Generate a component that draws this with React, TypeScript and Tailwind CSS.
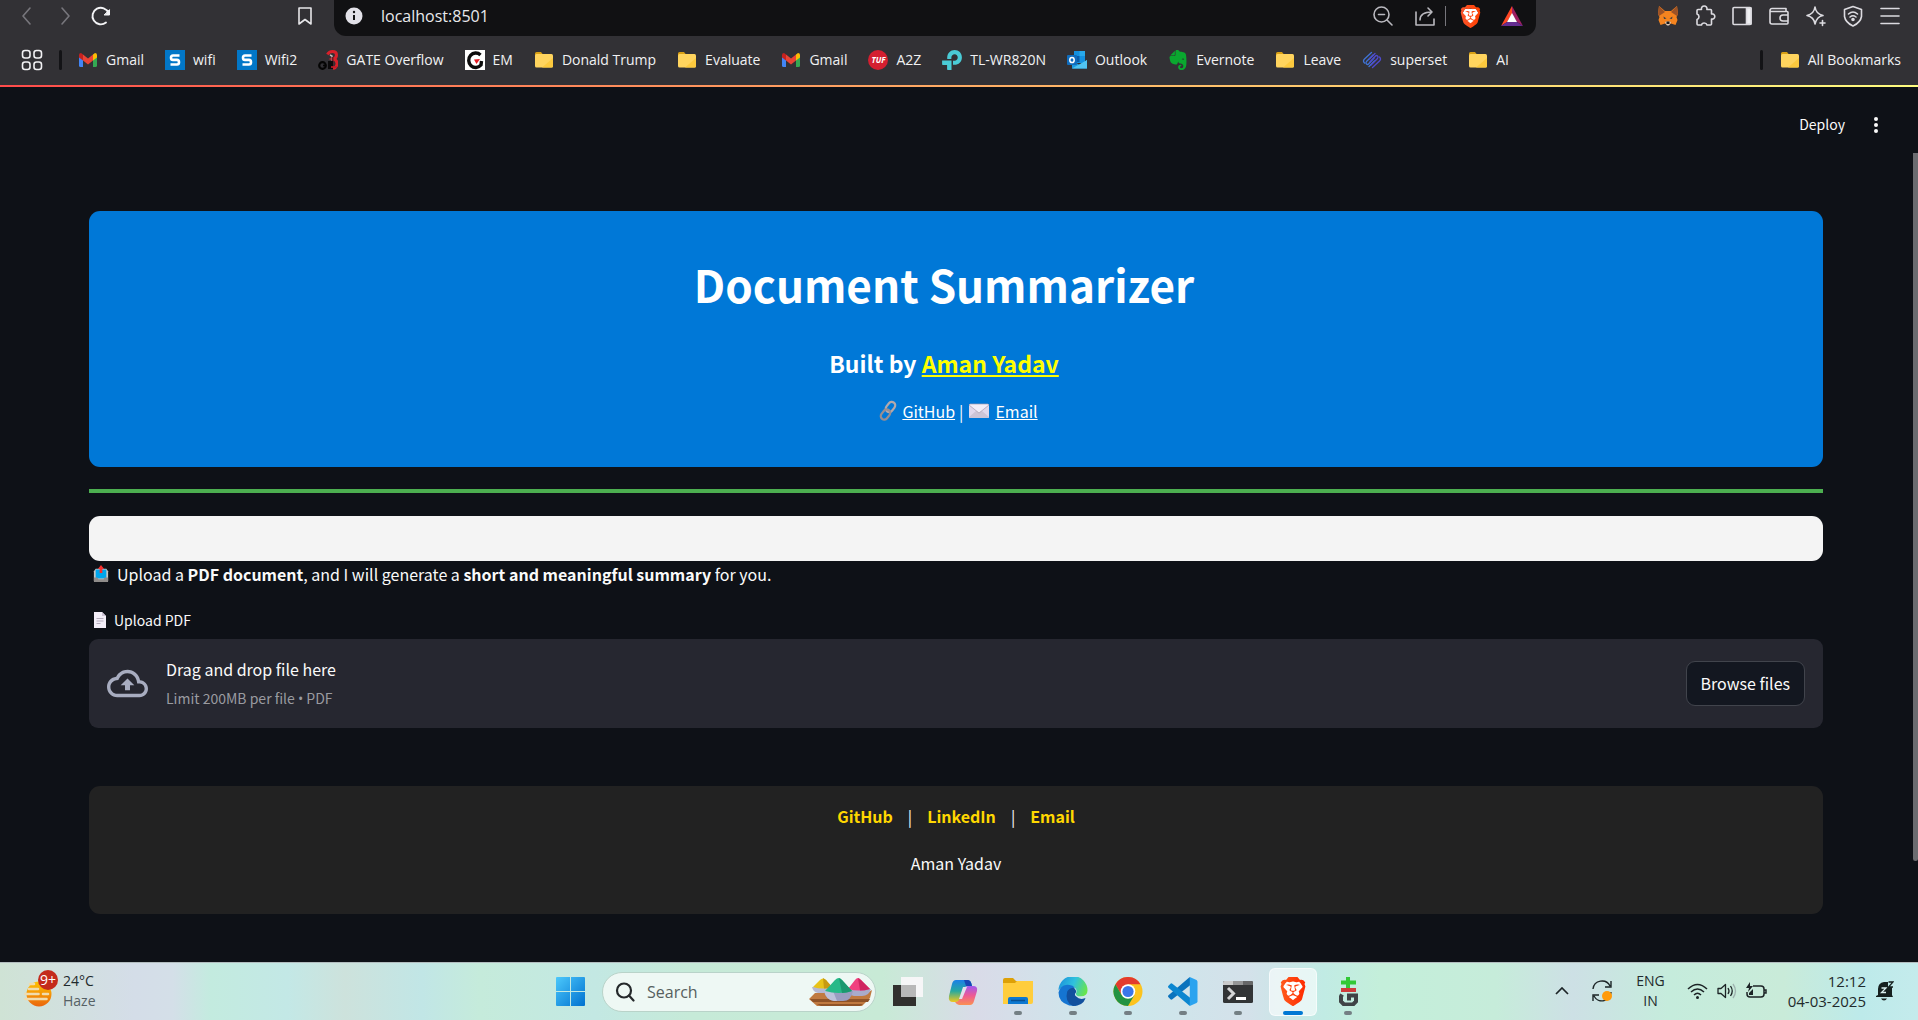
import type { ReactNode } from "react";
import { SiBrave, SiEvernote, SiTplink } from "react-icons/si";

/* ---------- shared glyphs ---------- */

function Brave({ size, from, to, id }: { size: number; from: string; to: string; id: string }) {
  return (
    <svg width={size} height={size} viewBox="0 0 24 24" aria-hidden="true">
      <defs>
        <linearGradient id={id} x1="0" x2="1">
          <stop offset="0" stopColor={from} />
          <stop offset="1" stopColor={to} />
        </linearGradient>
      </defs>
      <path d="M6 4h12l2 4-2 9-6 5-6-5-2-9z" fill="#fff" />
      <SiBrave size={24} fill={`url(#${id})`} color={from} />
    </svg>
  );
}

function Folder() {
  return (
    <svg width="20" height="20" viewBox="0 0 20 20" aria-hidden="true">
      <path d="M1 3.500Q1 2 2.500 2H7l2 2.500h8V9H1z" fill="#d9a014" />
      <rect x="1" y="4" width="18" height="13.500" rx="1.500" fill="#ffd45e" />
      <path d="M19 8v8q0 1.500-1.500 1.500H8z" fill="#fcc93e" />
    </svg>
  );
}

function Gmail() {
  return (
    <svg width="20" height="20" viewBox="0 0 20 20" aria-hidden="true">
      <path d="M1 5v10.500Q1 17 2.500 17H5V8z" fill="#4285f4" />
      <path d="M19 5v10.500q0 1.500-1.500 1.500H15V8z" fill="#34a853" />
      <path d="M15 4.500 17 3q2 0 2 2v2.500L15 10.500z" fill="#fbbc04" />
      <path d="M1 5q0-2 2-2l2 1.500v6L1 7.500z" fill="#c5221f" />
      <path d="M5 4.500 10 8.500l5-4v6l-5 4-5-4z" fill="#ea4335" />
    </svg>
  );
}

function BlueS() {
  return (
    <svg width="20" height="20" viewBox="0 0 20 20" aria-hidden="true">
      <rect width="20" height="20" fill="#0277c8" />
      <path d="M14.500 5.500H8q-2 0-2 2.200t2 2.200h4q2 0 2 2.300t-2 2.300H5.500" fill="none" stroke="#fff" strokeWidth="2.600" />
    </svg>
  );
}

function GateOverflow() {
  return (
    <svg width="20" height="20" viewBox="0 0 20 20" fill="none" aria-hidden="true">
      <path d="M9.500 4.500Q11 1.500 14.500 1.500q4 0 4 3.500 0 3-3 4 3.500 1 3.500 4.500 0 4-4 5" stroke="#d8202a" strokeWidth="3" />
      <path d="M12 5l2 1v7" stroke="#c9b9ba" strokeWidth="1.400" />
      <path d="M14.500 7v9" stroke="#6f1a20" strokeWidth="2" />
      <circle cx="4.500" cy="15.500" r="3.300" stroke="#050505" strokeWidth="2.200" />
      <path d="M10 11h5v8h-5z" fill="#0c0b0c" />
      <path d="M5 15.500h3" stroke="#050505" strokeWidth="1.600" />
      <path d="M13 17h6" stroke="#c01c27" strokeWidth="1.600" />
    </svg>
  );
}

function EmIcon() {
  return (
    <svg width="20" height="20" viewBox="0 0 20 20" aria-hidden="true">
      <rect width="20" height="20" fill="#fff" />
      <path d="M15.500 5A7 7.200 0 1 0 16 15l.5-4" fill="none" stroke="#0b0b0b" strokeWidth="3.400" />
      <path d="m9 9.500 6-.5-3.500 5z" fill="#e31b23" />
    </svg>
  );
}

function Tuf() {
  return (
    <span className="flex size-5 items-center justify-center rounded-full bg-[#d41f30] text-[8px] font-bold text-white italic">
      TUF
    </span>
  );
}

function Outlook() {
  return (
    <svg width="20" height="20" viewBox="0 0 20 20" aria-hidden="true">
      <path d="M7 1h11v12H7z" fill="#1490df" />
      <path d="M12.500 1H18v5h-5.500z" fill="#28a8ea" />
      <path d="M7 6h5.500v6H7z" fill="#0a5ca8" />
      <path d="M5 10l7.500 5L20 10v8.500H5z" fill="#1a9ae0" />
      <path d="m5 18.500 15-8.500v8.500z" fill="#50c4f2" />
      <rect y="5" width="10" height="10" rx="1" fill="#0f6cbd" />
      <ellipse cx="5" cy="10" rx="2.200" ry="2.600" fill="none" stroke="#fff" strokeWidth="1.500" />
    </svg>
  );
}

function Superset() {
  return (
    <svg width="20" height="20" viewBox="0 0 20 20" fill="none" strokeWidth="1.300" strokeLinecap="round" aria-hidden="true">
      <path d="M9.500 2.500 2.500 9q-2 2 0 4M11 5 4.500 11.500q-1 1.500 0 2.500t2 0L12 8M7 16.500 12.500 11" stroke="#3f74d8" />
      <path d="M10.500 17.500 17.500 11q2-2 0-4M9 15l6.500-6.500q1-1.500 0-2.500t-2 0L8 12M13 3.500 7.500 9" stroke="#4f4bd0" />
    </svg>
  );
}

function ToolIcon({ children, color = "#dcdbe0" }: { children: ReactNode; color?: string }) {
  return (
    <svg
      width="22"
      height="22"
      viewBox="0 0 22 22"
      fill="none"
      stroke={color}
      strokeWidth="1.600"
      strokeLinecap="round"
      strokeLinejoin="round"
      aria-hidden="true"
    >
      {children}
    </svg>
  );
}

/* ---------- browser chrome ---------- */

const bookmarks: { label: string; icon: ReactNode }[] = [
  { label: "Gmail", icon: <Gmail /> },
  { label: "wifi", icon: <BlueS /> },
  { label: "Wifi2", icon: <BlueS /> },
  { label: "GATE Overflow", icon: <GateOverflow /> },
  { label: "EM", icon: <EmIcon /> },
  { label: "Donald Trump", icon: <Folder /> },
  { label: "Evaluate", icon: <Folder /> },
  { label: "Gmail", icon: <Gmail /> },
  { label: "A2Z", icon: <Tuf /> },
  { label: "TL-WR820N", icon: <SiTplink size={20} color="#4acbd6" /> },
  { label: "Outlook", icon: <Outlook /> },
  { label: "Evernote", icon: <SiEvernote size={20} color="#0aa82f" /> },
  { label: "Leave", icon: <Folder /> },
  { label: "superset", icon: <Superset /> },
  { label: "AI", icon: <Folder /> },
];

function Toolbar() {
  return (
    <div className="flex h-9">
      <div className="flex w-[334px] shrink-0 items-center pb-1">
        <button aria-label="Back" className="ml-4">
          <ToolIcon color="#77767c"><path d="m14 3-7 8 7 8" /></ToolIcon>
        </button>
        <button aria-label="Forward" className="ml-4">
          <ToolIcon color="#77767c"><path d="m8 3 7 8-7 8" /></ToolIcon>
        </button>
        <button aria-label="Reload" className="ml-[14px]">
          <ToolIcon color="#f4f4f6">
            <path d="M16 17.500A8.300 8.300 0 1 1 18.500 8" strokeWidth="1.900" />
            <path d="M19.500 5v5h-5z" fill="#f4f4f6" strokeWidth="1" />
          </ToolIcon>
        </button>
        <button aria-label="Bookmark this page" className="mr-[18px] ml-auto">
          <ToolIcon color="#e6e6e9"><path d="M5 3h12v16l-6-4.500L5 19z" /></ToolIcon>
        </button>
      </div>
      <div className="flex flex-1 items-center rounded-b-xl bg-[#111113] pb-1">
        <svg width="18" height="18" viewBox="0 0 18 18" className="ml-[11px]" aria-hidden="true">
          <circle cx="9" cy="9" r="8.500" fill="#e2e1e8" />
          <path d="M9 8v5" stroke="#111113" strokeWidth="2" />
          <circle cx="9" cy="5" r="1.200" fill="#111113" />
        </svg>
        <input
          aria-label="Address"
          defaultValue="localhost:8501"
          className="ml-[18px] min-w-0 flex-1 bg-transparent text-base text-[#e9e9ec] outline-none"
        />
        <button aria-label="Zoom">
          <ToolIcon color="#b9b8be"><circle cx="9.500" cy="9.500" r="7.500" /><path d="m15 15 5 5M6.500 9.500h6" /></ToolIcon>
        </button>
        <button aria-label="Share" className="ml-5">
          <ToolIcon color="#b9b8be"><path d="M2 7v13h18v-6M6 15c0-6 4-8 12-8M14 3l4 4-4 4" /></ToolIcon>
        </button>
        <div className="mr-[13px] ml-[9px] h-5 w-px bg-[#77767c]" />
        <button aria-label="Brave Shields"><Brave size={23} from="#fb542b" to="#ff4000" id="shield" /></button>
        <button aria-label="Brave Rewards" className="mr-3 ml-[18px]">
          <svg width="24" height="22" viewBox="0 0 24 22" aria-hidden="true">
            <path d="M12 1v8l-5 8-6 4z" fill="#ff4724" />
            <path d="M12 1v8l5 8 6 4z" fill="#9e1f63" />
            <path d="m1 21 6-4h10l6 4z" fill="#662d91" />
            <path d="m12 8 5 9H7z" fill="#fff" />
          </svg>
        </button>
      </div>
      <div className="flex w-[382px] shrink-0 items-center justify-end gap-[15px] pr-[17px] pb-1">
        <button aria-label="MetaMask">
          <svg width="22" height="22" viewBox="0 0 22 22" aria-hidden="true">
            <path d="m2 1 6 5h6l6-5 1 8-1.500 3 1 3-2 5-4.500-1.500L12 20h-2l-2-1.500L3.500 20l-2-5 1-3L1 9z" fill="#f5841f" />
            <path d="m2 1 6 6-6 4-1-2zM20 1l-6 6 6 4 1-2z" fill="#9c5226" />
            <path d="m6.500 11.500 3 2-2.500.5zM15.500 11.500l-3 2 2.500.5z" fill="#3b3f47" />
            <path d="m8 17.500 1-1h4l1 1-2 3h-2z" fill="#d8c8bb" />
            <path d="M9.500 16.500h3v2.500h-3z" fill="#17181c" />
          </svg>
        </button>
        <button aria-label="Extensions">
          <ToolIcon><path d="M3 5.500q0-1 1-1h3.500a2.800 2.800 0 1 1 5.400 0h3.600q1 0 1 1V9a2.600 2.600 0 1 1 0 5v5q0 1-1 1H13q-.5-2-2.800-2T7.500 20H4q-1 0-1-1v-4.500q2-.5 2-2.700T3 9z" /></ToolIcon>
        </button>
        <button aria-label="Sidebar">
          <ToolIcon><rect x="2" y="2.500" width="18" height="17" rx="1" /><path d="M15.500 3H20v16h-4.500z" fill="#f0f0f3" /></ToolIcon>
        </button>
        <button aria-label="Wallet">
          <ToolIcon><path d="M18 6.500V3.500H4a2 2 0 0 0-2 2V17a2 2 0 0 0 2 2h15q1 0 1-1V7.500q0-1-1-1H3M20 10h-5a3 3 0 0 0 0 6h5z" /></ToolIcon>
        </button>
        <button aria-label="Leo AI">
          <ToolIcon><path d="M10 2q1 7 8 8.500-3 .5-5 2.500t-3 6q-1-7-8-8.500Q9 9 10 2zM17.500 15.500v5M15 18h5" /></ToolIcon>
        </button>
        <button aria-label="VPN">
          <ToolIcon><path d="m11 1.500 8.500 3v7q-1 6-8.500 9.500-7.500-3.500-8.500-9.500v-7zM6.500 9q4.500-4 9 0M8 12q3-2.500 6 0" /><circle cx="11" cy="14.500" r="1" fill="#dcdbe0" /></ToolIcon>
        </button>
        <button aria-label="Menu">
          <ToolIcon><path d="M2 3.500h18M2 11h18M2 18.500h18" /></ToolIcon>
        </button>
      </div>
    </div>
  );
}

function BookmarkBar() {
  return (
    <nav aria-label="Bookmarks" className="flex h-[49px] items-center pr-[17px] pb-[2px] pl-[21px] text-sm text-[#f1f1f3]">
      <button aria-label="Apps">
        <ToolIcon color="#f1f1f3">
          <rect x="1.500" y="1.500" width="7.500" height="7.500" rx="2.500" />
          <rect x="13" y="1.500" width="7.500" height="7.500" rx="2.500" />
          <rect x="1.500" y="13" width="7.500" height="7.500" rx="2.500" />
          <rect x="13" y="13" width="7.500" height="7.500" rx="2.500" />
        </ToolIcon>
      </button>
      <div className="mx-4 h-5 w-[3px] shrink-0 rounded bg-[#131316]" />
      <div className="flex flex-1 items-center gap-[21px]">
        {bookmarks.map((b, i) => (
          <a key={i} href="#" className="flex items-center gap-2 whitespace-nowrap">
            {b.icon}
            {b.label}
          </a>
        ))}
      </div>
      <div className="mr-[17px] h-5 w-[3px] rounded bg-[#131316]" />
      <a href="#" className="flex items-center gap-2 whitespace-nowrap"><Folder />All Bookmarks</a>
    </nav>
  );
}

/* ---------- page content ---------- */

function LinkEmoji() {
  return (
    <svg width="20" height="22" viewBox="0 0 20 22" fill="none" aria-hidden="true">
      <rect x="9" y="1.500" width="7" height="11" rx="3.500" transform="rotate(38 12.500 7)" stroke="#b4a9ac" strokeWidth="2.200" />
      <rect x="4" y="9" width="7" height="11" rx="3.500" transform="rotate(38 7.500 14.500)" stroke="#998e91" strokeWidth="2.200" />
    </svg>
  );
}

function MailEmoji() {
  return (
    <svg width="20" height="16" viewBox="0 0 20 16" aria-hidden="true">
      <rect y="1" width="20" height="14" rx="1" fill="#e1d8ec" />
      <path d="m0 14 7-6h6l7 6-1 1H1z" fill="#cdc4d6" />
      <path d="M0 2 10 10 20 2l-1-1H1z" fill="#f3eef8" stroke="#a79caf" strokeWidth=".7" />
    </svg>
  );
}

function OutboxEmoji() {
  return (
    <svg width="16" height="18" viewBox="0 0 18 20" aria-hidden="true">
      <path d="M3 4h12l2 3v11q0 1-1 1H2q-1 0-1-1V7z" fill="#c9c6c4" />
      <path d="M3 5h12v10H3z" fill="#00a6ed" />
      <path d="M1 14h4l1 2h6l1-2h4v4q0 1-1 1H2q-1 0-1-1z" fill="#8f8c8a" />
      <path d="M9 0 5.500 4.500h2V9h3V4.500h2z" fill="#f8312f" />
    </svg>
  );
}

function PageEmoji() {
  return (
    <svg width="14" height="18" viewBox="0 0 14 18" aria-hidden="true">
      <path d="M1 1h8l4 4v12H1z" fill="#f3eef8" />
      <path d="M9 1v4h4z" fill="#cdc4d6" />
      <path d="M3.500 7.500h7M3.500 10h7M3.500 12.500h4" stroke="#b4acbc" strokeWidth="1" />
    </svg>
  );
}

function Hero() {
  return (
    <section className="flex h-64 flex-col items-center rounded-[11px] bg-[#0078d7] pt-10 text-white">
      <h1 className="mr-6 text-[44px] leading-[66px] font-bold">Document Summarizer</h1>
      <h3 className="mt-7 mr-6 text-[23px] leading-9 font-bold">
        Built by <a href="#" className="text-[#ffff00] underline">Aman Yadav</a>
      </h3>
      <p className="mt-4 flex items-center gap-1 pl-1 text-base leading-7">
        <LinkEmoji />
        <a href="#" className="underline">GitHub</a>|
        <span className="ml-[2px]"><MailEmoji /></span>
        <a href="#" className="ml-[2px] underline">Email</a>
      </p>
    </section>
  );
}

function Uploader() {
  return (
    <section>
      <label htmlFor="pdf" className="flex items-center gap-[7px] pl-1 text-sm leading-6">
        <PageEmoji />
        Upload PDF
      </label>
      <input id="pdf" type="file" accept="application/pdf" className="sr-only" />
      <div className="mt-[7px] flex h-[89px] items-center rounded-[9px] bg-[#262730] px-[18px]">
        <svg width="41" height="41" viewBox="0 0 24 24" fill="#a8adc0" aria-hidden="true">
          <path d="M19.350 10.040C18.670 6.590 15.640 4 12 4 9.110 4 6.600 5.640 5.350 8.040 2.340 8.360 0 10.910 0 14c0 3.310 2.690 6 6 6h13c2.760 0 5-2.240 5-5 0-2.640-2.050-4.780-4.650-4.960zM19 18H6c-2.210 0-4-1.790-4-4 0-2.050 1.530-3.760 3.560-3.970l1.070-.11.5-.95C8.080 7.140 9.940 6 12 6c2.620 0 4.880 1.860 5.390 4.430l.3 1.500 1.530.11c1.560.1 2.780 1.410 2.780 2.960 0 1.650-1.350 3-3 3zM8 13h2.550v3h2.900v-3H16l-4-4z" />
        </svg>
        <div className="ml-[18px] flex-1">
          <p className="text-base leading-[30px]">Drag and drop file here</p>
          <p className="text-sm leading-7 text-[#9a9ba0]">
            Limit 200MB per file <span className="font-['Open_Sans']">•</span> PDF
          </p>
        </div>
        <button className="h-[45px] rounded-[9px] border border-[#41444c] bg-[#131720] px-[14px] pb-[2px] text-base">
          Browse files
        </button>
      </div>
    </section>
  );
}

function Page() {
  return (
    <div className="flex flex-1 bg-[#0e1117] font-['Noto_Sans_CJK_SC',sans-serif] text-[#fafafa]">
      <main className="flex-1 pb-12">
        <header className="flex h-[76px] items-center justify-end gap-[22px] pr-7 text-sm">
          <button className="pb-[2px]">Deploy</button>
          <button aria-label="Main menu">
            <svg width="18" height="18" viewBox="0 0 18 18" fill="#fafafa" aria-hidden="true">
              <circle cx="9" cy="3" r="2" />
              <circle cx="9" cy="9" r="2" />
              <circle cx="9" cy="15" r="2" />
            </svg>
          </button>
        </header>
        <div className="mt-12 mr-[90px] ml-[89px]">
          <Hero />
          <hr className="mt-[22px] border-t-4 border-[#4caf50]" />
          <div className="mt-[23px] h-[45px] rounded-[11px] bg-[#f4f4f4]" />
          <p className="flex items-center gap-2 pl-1 text-base leading-[26px]">
            <OutboxEmoji />
            <span>
              Upload a <b>PDF document</b>, and I will generate a <b>short and meaningful summary</b> for you.
            </span>
          </p>
          <div className="mt-[21px]">
            <Uploader />
          </div>
          <footer className="mt-[58px] h-32 rounded-[11px] bg-[#222222] pt-4 text-center text-base leading-7">
            <p className="flex justify-center gap-[15px]">
              <a href="#" className="font-bold text-[#ffd700]">GitHub</a>|
              <a href="#" className="font-bold text-[#ffd700]">LinkedIn</a>|
              <a href="#" className="font-bold text-[#ffd700]">Email</a>
            </p>
            <p className="mt-[19px]">Aman Yadav</p>
          </footer>
        </div>
      </main>
      <div className="w-[5px] pt-[66px]">
        <div className="h-[708px] rounded-b bg-[#6b6c70]" />
      </div>
    </div>
  );
}

/* ---------- taskbar ---------- */

function TaskCell({ children, label, state }: { children: ReactNode; label: string; state?: "open" | "active" }) {
  return (
    <div className="flex w-[55px] justify-center">
      <button
        aria-label={label}
        className={
          state === "active"
            ? "flex h-12 w-12 flex-col items-center rounded-md border border-white/60 bg-white/60 pt-2"
            : "flex h-12 w-12 flex-col items-center pt-[9px]"
        }
      >
        {children}
        {state === "open" && <span className="mt-[5px] h-1 w-2 rounded-full bg-[#747f84]" />}
        {state === "active" && <span className="mt-[5px] h-1 w-5 rounded-full bg-[#0078d4]" />}
      </button>
    </div>
  );
}

function HoliArt() {
  return (
    <svg width="64" height="30" viewBox="0 0 64 30" aria-hidden="true">
      <path d="M0 22 6 16h52l5-3-2 8-8 8H8z" fill="#c07a40" />
      <path d="M1 22h60l-2 3H4zM8 27h46l-3 2H12z" fill="#8f5327" />
      <path d="M3 10h22q-2 6-8 6H9q-5-1-6-6z" fill="#b5b8d2" />
      <path d="m4 10 7-7q3-3 6 0l6 7q-9 3-19 0z" fill="#e8c318" />
      <path d="m14 1 3 2 6 7q-4 1.500-8 1.500z" fill="#c79a10" />
      <path d="M38 12h24q-2 7-9 7h-8q-6-1-7-7z" fill="#a9abca" />
      <path d="m39 12 7-9q3-4 6 0l9 9q-11 3-22 0z" fill="#f0417f" />
      <path d="m49 1 3 2 9 9q-5 1.500-10 1.500z" fill="#cf2560" />
      <path d="M15 14h29q-2 10-10 10H25q-8-1-10-10z" fill="#9a9dc0" />
      <path d="M15 14h9l4 10h-3q-8-1-10-10z" fill="#bec1da" />
      <path d="M16 14 26 3q4-4 7 0l10 11q-13 4-27 0z" fill="#27b988" />
      <path d="m30 1 3 2 10 11q-5 2-10 2z" fill="#1a986f" />
    </svg>
  );
}

function Taskbar() {
  return (
    <footer className="grid h-[59px] grid-cols-[1fr_auto_1fr] items-center border-t border-[#b3bdbf] bg-[linear-gradient(90deg,#cfe3d5_0%,#d4dde8_7%,#d4dfe8_9%,#c3ebdf_11%,#c3e8e6_15%,#cde2dc_18%,#c1e6e6_22%,#c5ebdb_25%,#c3e8e3_31%,#c6ead8_36%,#c8ead6_46%,#d9dbe8_51%,#cbe8ec_58%,#d4e1ea_65%,#c1ebe4_69%,#c4efda_72%,#c6ecda_78%,#cde0e5_82%,#c5ecdc_87%,#c9ebd9_93%,#bdeaea_97%,#c4ebec_100%)] text-[#1f2a2c]">
      <div className="flex items-center gap-[9px] pb-[2px] pl-6 text-sm leading-5">
        <div className="relative h-[34px] w-[30px]">
          <svg width="30" height="34" viewBox="0 0 30 34" aria-hidden="true">
            <defs>
              <linearGradient id="sun" x1="0" x2="0" y1="0" y2="1">
                <stop offset="0" stopColor="#ffc400" />
                <stop offset="1" stopColor="#ea650d" />
              </linearGradient>
            </defs>
            <circle cx="15" cy="20" r="12.500" fill="url(#sun)" />
            <path d="M6 10h4M5 15h9M1.500 20h13M19 20h5M1.500 25h21" stroke="#f0dcae" strokeWidth="2.600" strokeLinecap="round" />
          </svg>
          <span className="absolute -top-1 left-[14px] flex size-5 items-center justify-center rounded-full bg-[#c42b1c] text-sm text-white">
            9+
          </span>
        </div>
        <div>
          <p>24°C</p>
          <p className="text-[#566165]">Haze</p>
        </div>
      </div>

      <div className="flex items-center">
        <TaskCell label="Start">
          <svg width="29" height="29" viewBox="0 0 29 29" aria-hidden="true">
            <defs>
              <linearGradient id="win" x1="0" y1="0" x2="1" y2="1">
                <stop offset="0" stopColor="#4cc8fb" />
                <stop offset="1" stopColor="#0071d0" />
              </linearGradient>
            </defs>
            <path d="M0 1q0-1 1-1h13v14H0zM15 0h13q1 0 1 1v13H15zM0 15h14v14H1q-1 0-1-1zM15 15h14v13q0 1-1 1H15z" fill="url(#win)" />
          </svg>
        </TaskCell>
        <label className="mx-1 flex h-10 w-[274px] items-center rounded-full border border-[#b9d3c9] bg-[#eef8f4] pr-[2px] pl-3">
          <svg width="20" height="20" viewBox="0 0 20 20" fill="none" stroke="#25292b" strokeWidth="2.200" strokeLinecap="round" aria-hidden="true">
            <circle cx="9" cy="8.500" r="7" />
            <path d="m14 13.500 4.500 5" />
          </svg>
          <input
            aria-label="Search"
            placeholder="Search"
            className="ml-3 min-w-0 flex-1 bg-transparent text-base outline-none placeholder:text-[#56605e]"
          />
          <HoliArt />
        </label>
        <TaskCell label="Task view">
          <svg width="30" height="30" viewBox="0 0 30 30" aria-hidden="true">
            <path d="M0 8h23v21H0z" fill="#31302e" />
            <path d="M8 0h22v20H8z" fill="#f6f6f7" />
            <path d="M8 8h15v12H8z" fill="#b8b8b8" />
          </svg>
        </TaskCell>
        <TaskCell label="Copilot">
          <svg width="30" height="30" viewBox="0 0 30 30" aria-hidden="true">
            <defs>
              <linearGradient id="cpl" x1="0" x2="0" y1="0" y2="1">
                <stop offset="0" stopColor="#1b7fe8" />
                <stop offset=".5" stopColor="#26a9a0" />
                <stop offset="1" stopColor="#f0c81c" />
              </linearGradient>
              <linearGradient id="cpr" x1="0" x2="0" y1="0" y2="1">
                <stop offset="0" stopColor="#a157ee" />
                <stop offset=".5" stopColor="#ee5a94" />
                <stop offset="1" stopColor="#fb9052" />
              </linearGradient>
            </defs>
            <path d="M8 3h12q3 0 4 6h-4q-3 0-4 3l-3 9q-1 4-5 4H5q-5 0-4-6L4 7q1-4 4-4z" fill="url(#cpl)" />
            <path d="M22 28H11q-2 0-4-3 4 0 5-4l4-9q1-3 5-3h4q5 0 4 5l-3 10q-1 4-4 4z" fill="url(#cpr)" />
            <path d="M16 3h4q3 0 4 6h-6z" fill="#1747b5" />
            <path d="m15 10 4 0-5 12h-3z" fill="#e4dfec" />
          </svg>
        </TaskCell>
        <TaskCell label="File Explorer" state="open">
          <svg width="30" height="29" viewBox="0 0 30 29" aria-hidden="true">
            <path d="M0 3q0-2 2-2h8l3 3h17v6H0z" fill="#dda007" />
            <path d="M0 6h12l2-2h16v21q0 2-2 2H0z" fill="#ffcd3c" />
            <path d="M5 27v-5q0-2 2-2h16q2 0 2 2v5z" fill="#0d78d1" />
            <path d="M8 23.500h14" stroke="#084f91" strokeWidth="1.500" />
          </svg>
        </TaskCell>
        <TaskCell label="Edge" state="open">
          <svg width="30" height="29" viewBox="0 0 30 30" aria-hidden="true">
            <defs>
              <linearGradient id="edgeTop" x1="0" x2="1" y1=".3" y2=".6">
                <stop offset="0" stopColor="#1c93dc" />
                <stop offset=".5" stopColor="#30c2dd" />
                <stop offset="1" stopColor="#6ae54b" />
              </linearGradient>
            </defs>
            <path d="M0 14A15 15 0 0 1 30 14q0 6-7 6-5 0-5-3 2-3-1-6-3-3-8-2-7 1-9 5z" fill="url(#edgeTop)" />
            <path d="M0 16q1-7 9-8 6 0 8 3-5 0-6 6 0 8 8 13-4 0-8-.5Q0 26 0 16z" fill="#1575d2" />
            <path d="M9 15q2-4 7-4 3 3 2 5-2 2 0 4 4 4 9 2h1q-3 8-13 8Q6 26 9 15z" fill="#12509e" />
          </svg>
        </TaskCell>
        <TaskCell label="Chrome" state="open">
          <svg width="30" height="29" viewBox="0 0 30 30" aria-hidden="true">
            <circle cx="15" cy="15" r="15" fill="#fcc31e" />
            <path d="M2 7.500A15 15 0 0 1 28 7.500H15L8.500 18.750z" fill="#e33b2e" />
            <path d="M2 7.500A15 15 0 0 0 15 30l6.500-11.250-13 0z" fill="#229342" />
            <circle cx="15" cy="15" r="7.500" fill="#fff" />
            <circle cx="15" cy="15" r="5.800" fill="#3a76ea" />
          </svg>
        </TaskCell>
        <TaskCell label="Visual Studio Code" state="open">
          <svg width="30" height="29" viewBox="0 0 30 30" aria-hidden="true">
            <path d="m22 0 1 8L4 23q-1 1-2 0l-2-2q-1-1 0-2z" fill="#0a73bd" />
            <path d="m22 30 1-8L4 7Q3 6 2 7L0 9q-1 1 0 2z" fill="#0b86d0" />
            <path d="m22 0 7 3q1 1 1 2v20q0 1-1 2l-7 3z" fill="#2ba3ef" />
          </svg>
        </TaskCell>
        <TaskCell label="Terminal" state="open">
          <svg width="30" height="29" viewBox="0 0 30 29" aria-hidden="true">
            <rect y="4" width="30" height="22" rx="1.500" fill="#323436" />
            <path d="M0 8V5.500Q0 4 1.500 4H10v4z" fill="#c9cacb" />
            <path d="M10 4h10v4H10z" fill="#959697" />
            <path d="M20 4h8.500Q30 4 30 5.500V8H20z" fill="#666768" />
            <path d="m5 11 5.500 5.500L5 22" fill="none" stroke="#d5d6d7" strokeWidth="3" />
            <path d="M13 21.500h10" stroke="#fff" strokeWidth="3" />
          </svg>
        </TaskCell>
        <TaskCell label="Brave" state="active">
          <Brave size={30} from="#ff5a1c" to="#ff2a00" id="lion" />
        </TaskCell>
        <TaskCell label="Git" state="open">
          <svg width="30" height="29" viewBox="0 0 30 29" fill="none" aria-hidden="true">
            <path d="M15 0v11M8 5.500h15" stroke="#31c936" strokeWidth="4" />
            <path d="M8 13h15" stroke="#cf3a3a" strokeWidth="4" />
            <path d="M9 17.500l-1 2v5l3 3h9l3-3v-6h-7v5" stroke="#3f4346" strokeWidth="4" />
          </svg>
        </TaskCell>
      </div>

      <div className="flex items-center justify-end pr-6 pb-[2px] text-sm leading-5">
        <button aria-label="Show hidden icons">
          <svg width="14" height="8" viewBox="0 0 14 8" fill="none" stroke="#1c2426" strokeWidth="1.700" aria-hidden="true"><path d="m1 7 6-6 6 6" /></svg>
        </button>
        <button aria-label="Updates" className="ml-[22px]">
          <svg width="22" height="22" viewBox="0 0 22 22" fill="none" stroke="#1c2426" strokeWidth="1.400" aria-hidden="true">
            <path d="M2 9a9 9 0 0 1 17-3M20 1v6h-6M20 12a9 9 0 0 1-17 4M2 21v-6h6" />
            <circle cx="16" cy="16" r="5" fill="#ff9a0a" stroke="none" />
          </svg>
        </button>
        <button aria-label="Input language" className="ml-[23px] text-center">
          ENG
          <br />
          IN
        </button>
        <button aria-label="Network, volume and battery" className="ml-[22px] flex items-center gap-[9px]">
          <svg width="21" height="18" viewBox="0 0 21 18" fill="none" stroke="#1c2426" strokeWidth="1.500" aria-hidden="true">
            <path d="M1 7q9.500-9 19 0M4 10q6.500-6 13 0M7 13q3.500-3.500 7 0" />
            <circle cx="10.500" cy="15.500" r="1.500" fill="#1c2426" stroke="none" />
          </svg>
          <svg width="20" height="18" viewBox="0 0 20 18" fill="none" stroke="#1c2426" strokeWidth="1.300" strokeLinejoin="round" aria-hidden="true">
            <path d="M1 6.500h3L8.500 2.500v13L4 11.500H1zM11 6q2 3 0 6M13.500 4q3.500 5 0 10" />
            <path d="M16 2q5 7 0 14" stroke="#9fb3b0" />
          </svg>
          <svg width="21" height="18" viewBox="0 0 21 18" fill="none" stroke="#1c2426" strokeWidth="1.500" aria-hidden="true">
            <path d="M7 4h8q3 0 3 3v5q0 3-3 3H4q-3 0-3-3v-2M18.500 8h1.500v3h-1.500" />
            <path d="M4 0 0 6h3L2 10l5-6H4zM3 13v-2l4-4v6z" fill="#1c2426" stroke="none" />
          </svg>
        </button>
        <button className="ml-[21px] text-right text-[15px] leading-5">
          12:12
          <br />
          04-03-2025
        </button>
        <button aria-label="Notifications" className="ml-[10px]">
          <svg width="18" height="20" viewBox="0 0 18 20" aria-hidden="true">
            <path d="M2 14V8q0-6 6-7h4v5h4v8l1 2H0v-1zM5 17.500h6q-1 2-3 2t-3-2z" fill="#16201f" />
            <path d="M5.500 7H10l-4.500 4.500H10" fill="none" stroke="#d9eeee" strokeWidth="1.300" />
            <path d="M12.500 1H17l-4.500 5H17" fill="none" stroke="#16201f" strokeWidth="1.300" />
          </svg>
        </button>
      </div>
    </footer>
  );
}

export default function App() {
  return (
    <div className="flex min-h-screen flex-col font-['Open_Sans',sans-serif]">
      <header className="bg-[#323135]">
        <Toolbar />
        <BookmarkBar />
        <div className="h-[2px] bg-linear-to-r from-[#ff4b4b] to-[#fffd80]" />
      </header>
      <Page />
      <Taskbar />
    </div>
  );
}
